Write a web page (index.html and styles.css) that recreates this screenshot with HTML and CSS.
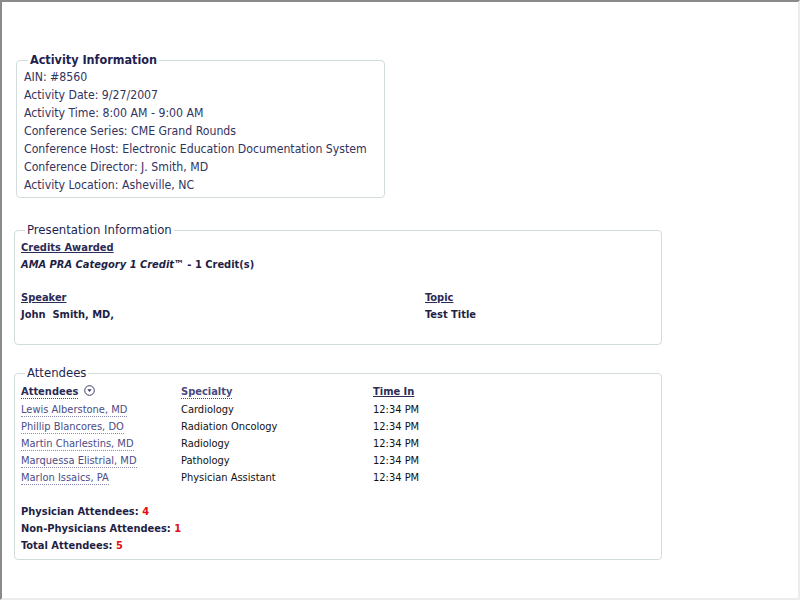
FILE: index.html
```html
<!DOCTYPE html>
<html lang="en">
<head>
    <meta charset="UTF-8">
    <title>Activity Report</title>
    <link rel="stylesheet" href="styles.css">
</head>
<body>
    <div class="frame">
        <fieldset class="box activity">
            <legend class="legend-bold">Activity Information</legend>
            <div class="info-line">AIN: #8560</div>
            <div class="info-line">Activity Date: 9/27/2007</div>
            <div class="info-line">Activity Time: 8:00 AM - 9:00 AM</div>
            <div class="info-line">Conference Series: CME Grand Rounds</div>
            <div class="info-line">Conference Host: Electronic Education Documentation System</div>
            <div class="info-line">Conference Director: J. Smith, MD</div>
            <div class="info-line">Activity Location: Asheville, NC</div>
        </fieldset>

        <fieldset class="box wide presentation">
            <legend>Presentation Information</legend>
            <div class="head">Credits Awarded</div>
            <div class="strong"><em>AMA PRA Category 1 Credit™</em> - 1 Credit(s)</div>
            <div class="speaker-grid">
                <div>
                    <div class="head">Speaker</div>
                    <div class="strong">John&nbsp; Smith, MD,</div>
                </div>
                <div>
                    <div class="head">Topic</div>
                    <div class="strong">Test Title</div>
                </div>
            </div>
        </fieldset>

        <fieldset class="box wide attendees">
            <legend>Attendees</legend>
            <table class="att-table">
                <thead>
                    <tr>
                        <th class="col-name"><span class="sort">Attendees</span>
                            <svg class="sort-icon" width="11" height="11" viewBox="0 0 11 11">
                                <circle cx="5.5" cy="5.5" r="4.8" fill="none" stroke="#3a3a6a" stroke-width="1"/>
                                <path d="M3.3 4.3 L7.7 4.3 L5.5 7 Z" fill="#3a3a6a"/>
                            </svg>
                        </th>
                        <th class="col-spec"><span class="sort">Specialty</span></th>
                        <th class="col-time"><span class="plain">Time In</span></th>
                    </tr>
                </thead>
                <tbody>
                    <tr><td><a href="#">Lewis Alberstone, MD</a></td><td>Cardiology</td><td>12:34 PM</td></tr>
                    <tr><td><a href="#">Phillip Blancores, DO</a></td><td>Radiation Oncology</td><td>12:34 PM</td></tr>
                    <tr><td><a href="#">Martin Charlestins, MD</a></td><td>Radiology</td><td>12:34 PM</td></tr>
                    <tr><td><a href="#">Marquessa Elistrial, MD</a></td><td>Pathology</td><td>12:34 PM</td></tr>
                    <tr><td><a href="#">Marlon Issaics, PA</a></td><td>Physician Assistant</td><td>12:34 PM</td></tr>
                </tbody>
            </table>
            <div class="totals">
                <div class="strong">Physician Attendees: <span class="count">4</span></div>
                <div class="strong">Non-Physicians Attendees: <span class="count">1</span></div>
                <div class="strong">Total Attendees: <span class="count">5</span></div>
            </div>
        </fieldset>
    </div>
</body>
</html>
```

FILE: styles.css
```css
* {
    box-sizing: border-box;
}

html, body {
    margin: 0;
    padding: 0;
    height: 100%;
    background: #fff;
}

body {
    font-family: "DejaVu Sans Condensed", "DejaVu Sans", Tahoma, sans-serif;
    color: #2e2e55;
}

.frame {
    height: 600px;
    border-top: 2px solid #8a8a8a;
    border-left: 2px solid #8a8a8a;
    border-right: 2px solid #ececec;
    border-bottom: 2px solid #ececec;
    padding: 51px 0 0 12px;
}

.box {
    border: 1px solid #d3dcdc;
    border-radius: 4px;
    margin: 0 0 24px 0;
    padding: 0 6px 4px 6px;
}

.box legend {
    font-size: 13px;
    color: #1f1f50;
    padding: 0 2px;
    margin-left: 4px;
    line-height: 14px;
}

.box legend.legend-bold {
    font-weight: bold;
    font-size: 12.5px;
}

.activity {
    width: 369px;
    margin-left: 2px;
    margin-bottom: 25px;
    padding: 1px 7px 3px 7px;
}

.info-line {
    font-size: 12.2px;
    line-height: 18px;
    color: #333360;
}

.wide {
    width: 648px;
}

.presentation {
    padding: 2px 6px 21px 6px;
    margin-bottom: 21px;
}

.head {
    font-size: 11px;
    font-weight: bold;
    text-decoration: underline;
    line-height: 17px;
    color: #2b2b55;
}

.strong {
    font-size: 11px;
    font-weight: bold;
    line-height: 17px;
    color: #1f1f45;
}

.speaker-grid {
    display: grid;
    grid-template-columns: 404px 1fr;
    margin-top: 16px;
}

.attendees {
    padding-bottom: 5px;
}

.att-table {
    border-collapse: collapse;
    font-size: 11px;
    margin-top: 3px;
}

.att-table th {
    text-align: left;
    font-weight: bold;
    padding: 0;
    line-height: 18px;
    white-space: nowrap;
}

.att-table td {
    padding: 0;
    line-height: 17px;
    color: #111;
}

.col-name { width: 160px; }
.col-spec { width: 192px; }

.sort {
    color: #4a4a80;
    border-bottom: 1px dotted #4a4a80;
}

.col-name .sort {
    color: #2b2b55;
}

.plain {
    color: #2b2b55;
    text-decoration: underline;
}

.sort-icon {
    vertical-align: -1px;
    margin-left: 2px;
}

.att-table a {
    color: #4c4c86;
    text-decoration: none;
    border-bottom: 1px dotted #8a8ab0;
}

.totals {
    margin-top: 17px;
}

.count {
    color: #e01010;
}
```
